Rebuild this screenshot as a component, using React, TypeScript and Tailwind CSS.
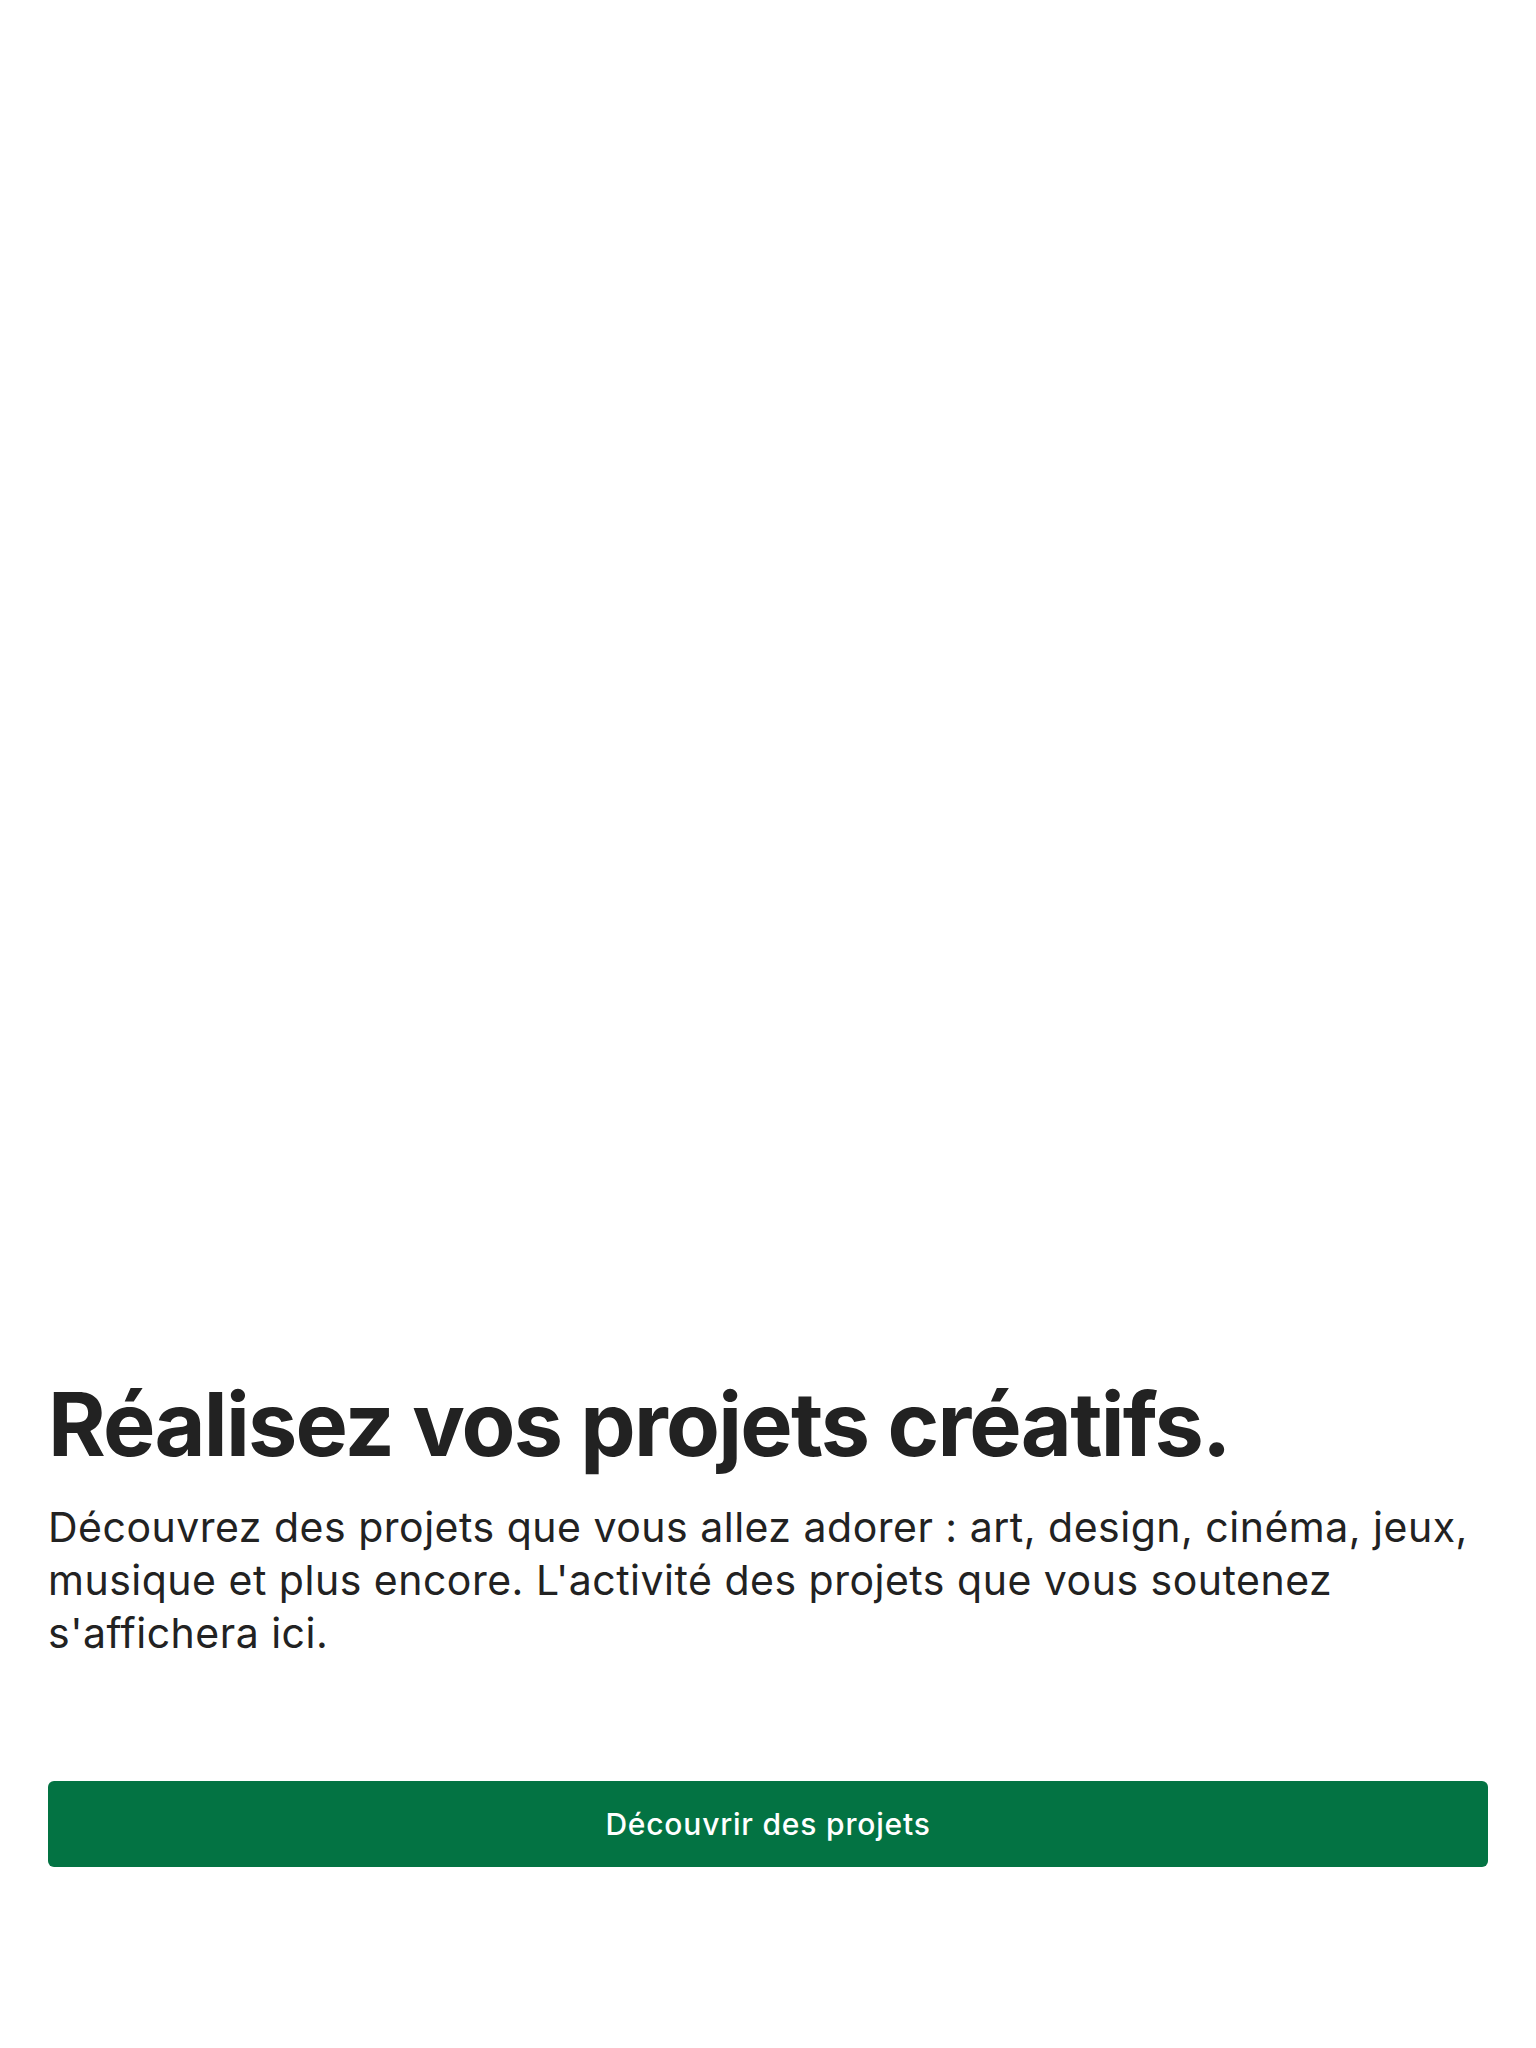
export default function App() {
  return (
    <div
      className="flex min-h-screen flex-col justify-end bg-white px-12 pb-[181px] text-[#222222]"
      style={{ fontFamily: 'Inter, "Noto Sans", sans-serif' }}
    >
      <h1 className="text-[88px] font-bold leading-[110px] tracking-[-0.02em]">
        Réalisez vos projets créatifs.
      </h1>
      <p className="mt-[22px] text-[41px] leading-[53px] tracking-[0.5px]">
        Découvrez des projets que vous allez adorer : art, design, cinéma, jeux,
        musique et plus encore. L'activité des projets que vous soutenez
        s'affichera ici.
      </p>
      <button className="mt-[121px] h-[86px] w-full rounded-md bg-[#037343] text-[30px] font-medium tracking-[0.8px] text-white">
        Découvrir des projets
      </button>
    </div>
  );
}
